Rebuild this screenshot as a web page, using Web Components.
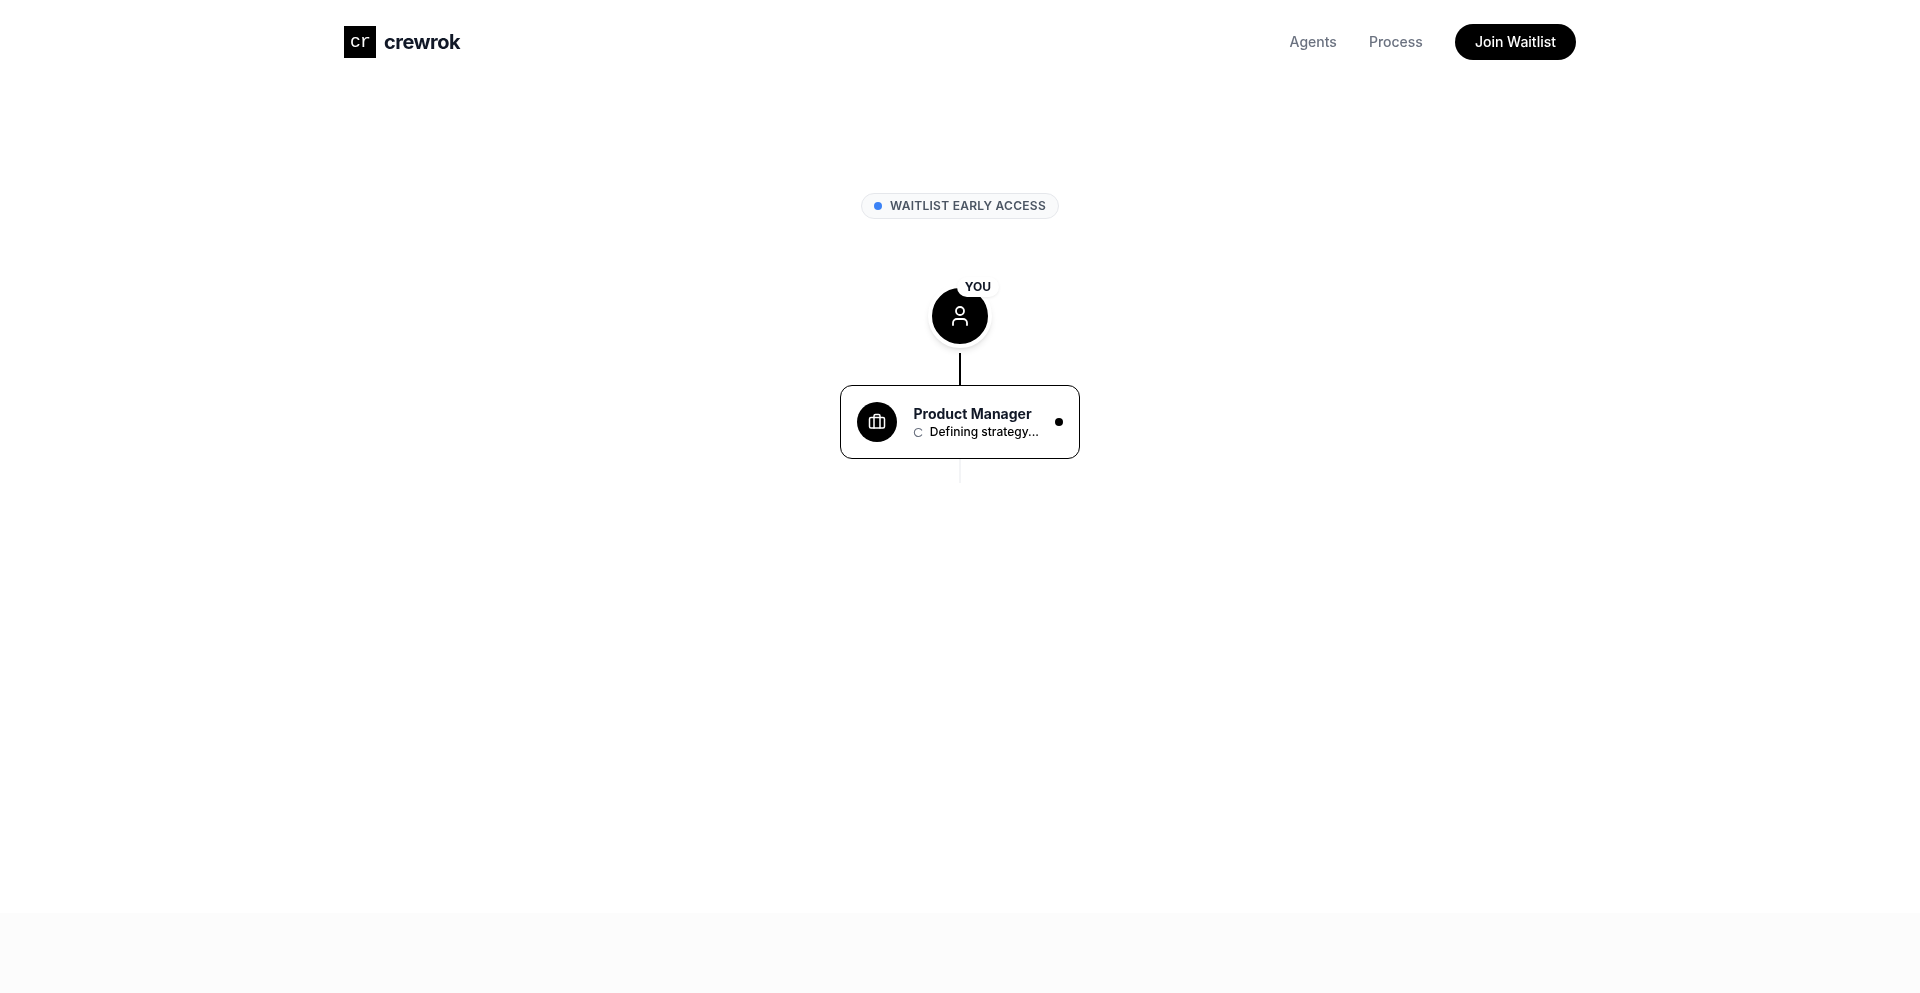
<!DOCTYPE html>
<html><head><meta charset="utf-8"><title>crewrok</title>
<style>
html,body{margin:0;padding:0;background:#fff;font-family:Inter,"Liberation Sans",sans-serif;height:993px;overflow:hidden}
x-header,x-main{will-change:transform}
</style></head><body>
<template id="t-header"><style>
:host{display:block;height:84px}
.in{width:1232px;margin:0 auto;height:84px;display:flex;align-items:center;justify-content:space-between}
.brand{display:flex;align-items:center;gap:8px}
.logo{width:32px;height:32px;background:#000;color:#fff;display:flex;align-items:center;justify-content:center;font:400 18px/1 "Liberation Mono",monospace;letter-spacing:-.9px}
.name{font-size:20px;font-weight:700;letter-spacing:-.5px;line-height:28px;color:#111827}
nav{display:flex;align-items:center;gap:32px;font-size:14px;line-height:20px;font-weight:500;color:#6b7280}
.btn{background:#000;color:#fff;border-radius:999px;height:36px;padding:0 20px;display:flex;align-items:center}
</style><div class="in"><div class="brand"><div class="logo">cr</div><div class="name">crewrok</div></div>
<nav><span>Agents</span><span>Process</span><span class="btn">Join Waitlist</span></nav></div></template>

<template id="t-pill"><style>
:host{display:inline-flex;align-items:center;gap:8px;width:198px;justify-content:center;height:26px;box-sizing:border-box;border:1px solid #e5e7eb;border-radius:999px;background:#f9fafb;font-size:12px;line-height:16px;font-weight:600;letter-spacing:.26px;color:#4b5563;white-space:nowrap}
i{width:8px;height:8px;border-radius:50%;background:#3b82f6}
</style><i></i><slot></slot></template>

<template id="t-avatar"><style>
:host{display:block;position:relative;width:64px;height:64px;box-sizing:border-box;border:4px solid #fff;border-radius:50%;background:#000;box-shadow:0 4px 6px -1px rgba(0,0,0,.1),0 2px 4px -2px rgba(0,0,0,.1);display:flex;align-items:center;justify-content:center}
.tag{position:absolute;left:25px;top:-11px;height:20px;width:42px;justify-content:center;display:flex;align-items:center;background:#fff;border-radius:999px;font-size:12px;line-height:16px;font-weight:700;color:#111827;box-shadow:0 1px 3px rgba(0,0,0,.08)}
</style><svg width="24" height="24" viewBox="0 0 24 24" fill="none" stroke="#fff" stroke-width="1.8" stroke-linecap="round" stroke-linejoin="round"><path d="M19 21v-2a4 4 0 0 0-4-4H9a4 4 0 0 0-4 4v2"/><circle cx="12" cy="7" r="4"/></svg><div class="tag">YOU</div></template>

<template id="t-card"><style>
:host{display:flex;align-items:center;width:240px;height:74px;box-sizing:border-box;padding:0 16px;gap:16px;border:1px solid #000;border-radius:12px;background:#fff}
.ic{width:40px;height:40px;border-radius:50%;background:#000;display:flex;align-items:center;justify-content:center;flex:none}
.tx{flex:1;min-width:0}
.t{font-size:14px;font-weight:650;line-height:20px;color:#111827;padding-left:.5px}
.s{display:flex;align-items:center;gap:6px;font-size:12px;font-weight:500;line-height:16px;color:#000;white-space:nowrap}
.s svg{transform:rotate(36deg)}
.dot{width:8px;height:8px;border-radius:50%;background:#000;flex:none}
</style><div class="ic"><svg width="18" height="18" viewBox="0 0 24 24" fill="none" stroke="#fff" stroke-width="2" stroke-linecap="round" stroke-linejoin="round"><path d="M16 20V4a2 2 0 0 0-2-2h-4a2 2 0 0 0-2 2v16"/><rect x="2" y="6" width="20" height="14" rx="2"/></svg></div>
<div class="tx"><div class="t"><slot name="title"></slot></div><div class="s"><svg width="11" height="11" viewBox="0 0 24 24" fill="none" stroke="#6b7280" stroke-width="2.4" stroke-linecap="round"><path d="M21 12a9 9 0 1 1-6.2-8.56"/></svg><slot name="status"></slot></div></div><div class="dot"></div></template>

<template id="t-main"><style>
:host{display:flex;flex-direction:column;align-items:center;height:829px;padding-top:109px;box-sizing:border-box}
.a{height:32px;width:2px;background:#000;margin-top:5px}
.b{height:24px;width:2px;background:#f3f4f6}
x-pill{margin-bottom:65px}
</style><x-pill>WAITLIST EARLY ACCESS</x-pill><x-avatar></x-avatar><div class="a"></div>
<x-card><span slot="title">Product Manager</span><span slot="status">Defining strategy...</span></x-card><div class="b"></div></template>

<template id="t-band"><style>:host{display:block;height:80px;background:#fcfcfc}</style></template>

<x-header></x-header><x-main></x-main><x-band></x-band>
<script>
for (const n of ['header','pill','avatar','card','main','band']) {
  customElements.define('x-'+n, class extends HTMLElement {
    constructor(){super();this.attachShadow({mode:'open'}).appendChild(document.getElementById('t-'+n).content.cloneNode(true));}
  });
}
</script>
</body></html>
